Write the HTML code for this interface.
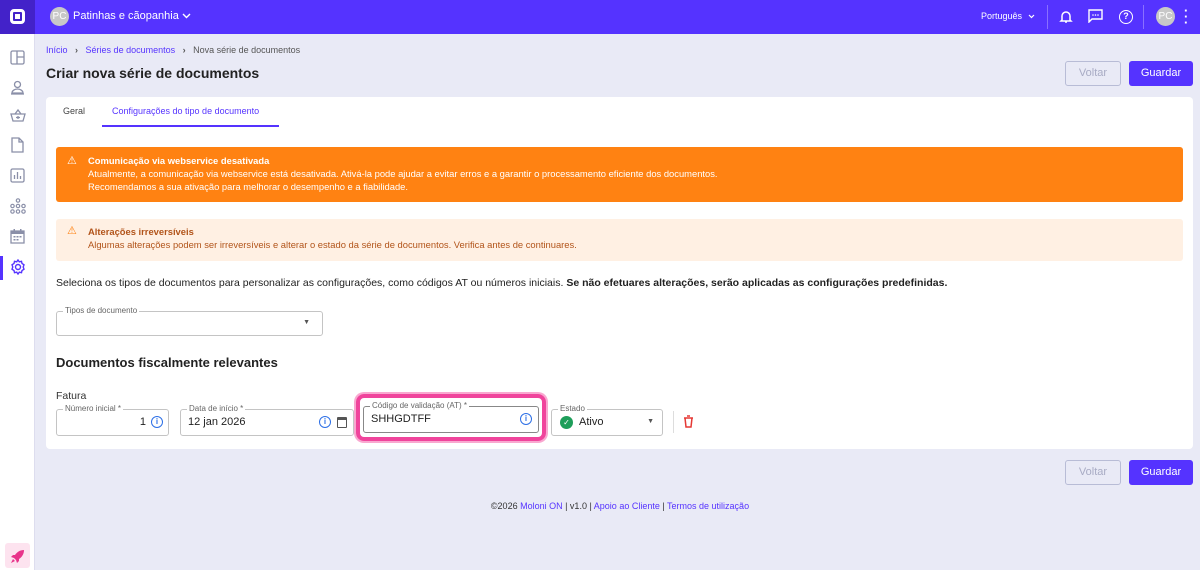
<!DOCTYPE html>
<html><head><meta charset="utf-8"><style>
*{box-sizing:border-box;margin:0;padding:0}
body{width:1200px;height:570px;overflow:hidden;background:#e9eaf6;font-family:"Liberation Sans",sans-serif;color:#222;position:relative;font-size:12px}
.top{position:absolute;left:0;top:0;width:1200px;height:34px;background:#5533ff;color:#fff}
.logo{position:absolute;left:0;top:0;width:35px;height:34px;background:#4322c9}
.side{position:absolute;left:0;top:34px;width:35px;height:536px;background:#fff;border-right:1px solid #dde}
.side svg{position:absolute;left:10px}
.av{position:absolute;width:19px;height:19px;border-radius:50%;background:#c8c8c8;color:#fff;font-size:10px;text-align:center;line-height:19px}
.btn{position:absolute;height:25px;border-radius:3px;font-size:11px;text-align:center;line-height:23px}
.bv{border:1px solid #b8bcd6;color:#a8abc4;background:transparent;width:56px}
.bg{background:#5533ff;color:#fff;width:64px;line-height:25px}
.card{position:absolute;left:46px;top:97px;width:1147px;height:352px;background:#fff;border-radius:4px}
.a1{position:absolute;left:10px;top:50px;width:1127px;height:55px;background:#ff8212;border-radius:3px;color:#fff;font-size:9.4px;line-height:13px;padding:7px 0 0 32px}
.a2{position:absolute;left:10px;top:122px;width:1127px;height:42px;background:#fff0e3;border-radius:3px;color:#b2541a;font-size:9.4px;line-height:13px;padding:6px 0 0 32px}
.fld{position:absolute;height:27px;border:1px solid #c4c4c4;border-radius:3px;top:312px}
.lb{position:absolute;top:-6px;left:6px;background:#fff;padding:0 2px;font-size:8px;color:#666;line-height:10px}
.i{position:absolute;width:12px;height:12px;border:1.3px solid #2d6fe6;border-radius:50%;color:#2d6fe6;font-size:8px;text-align:center;line-height:10px;font-weight:bold}
</style></head><body>
<div class="top">
<div class="logo"><div style="position:absolute;left:10px;top:9px;width:15px;height:15px;border:3px solid #fff;border-radius:4px"></div><div style="position:absolute;left:15px;top:14px;width:5px;height:5px;background:#fff"></div></div>
<div class="av" style="left:50px;top:7px">PC</div>
<div style="position:absolute;left:73px;top:10px;font-size:11px">Patinhas e cãopanhia</div>
<svg style="position:absolute;left:182px;top:13px" width="9" height="6" viewBox="0 0 9 6"><path d="M1 1l3.5 3.5L8 1" stroke="#fff" stroke-width="1.4" fill="none"/></svg>
<div style="position:absolute;left:981px;top:11px;font-size:9px">Português</div>
<svg style="position:absolute;left:1028px;top:14px" width="7" height="5" viewBox="0 0 7 5"><path d="M1 1l2.5 2.5L6 1" stroke="#fff" stroke-width="1.2" fill="none"/></svg>
<div style="position:absolute;left:1047px;top:5px;width:1px;height:24px;background:#8a70ff"></div>
<div style="position:absolute;left:1143px;top:5px;width:1px;height:24px;background:#8a70ff"></div>
<svg style="position:absolute;left:1059px;top:9px" width="14" height="16" viewBox="0 0 14 16"><path d="M3 11V7a4 4 0 018 0v4l1 1H2z M6 13h2" stroke="#fff" stroke-width="1.5" fill="none"/></svg>
<svg style="position:absolute;left:1088px;top:9px" width="15" height="14" viewBox="0 0 15 14"><path d="M1 1h13v9H4l-3 3z" stroke="#fff" stroke-width="1.4" fill="none"/><circle cx="5" cy="6" r=".8" fill="#fff"/><circle cx="7.5" cy="6" r=".8" fill="#fff"/><circle cx="10" cy="6" r=".8" fill="#fff"/></svg>
<div style="position:absolute;left:1119px;top:10px;width:14px;height:14px;border:1.5px solid #fff;border-radius:50%;font-size:9px;text-align:center;line-height:11px;font-weight:bold">?</div>
<div class="av" style="left:1156px;top:7px">PC</div>
<div style="position:absolute;left:1184px;top:8px;font-size:13px;font-weight:bold;line-height:6px">·<br>·<br>·</div>
</div>
<div class="side">
<svg style="top:16px" width="15" height="15" viewBox="0 0 15 15" fill="none" stroke="#8a8fa8" stroke-width="1.3"><rect x="1" y="1" width="13" height="13" rx="1.5"/><path d="M7 1v13M7 7h7"/></svg>
<svg style="top:46px" width="15" height="15" viewBox="0 0 15 15" fill="none" stroke="#8a8fa8" stroke-width="1.3"><circle cx="7.5" cy="4.5" r="3"/><path d="M2 13a5.5 4 0 0111 0zM1 14h13"/></svg>
<svg style="top:74px" width="16" height="15" viewBox="0 0 16 15" fill="none" stroke="#8a8fa8" stroke-width="1.3"><path d="M1 6h14l-2 7H3zM5 6l3-4 3 4M8 8v3M6 9.5h4"/></svg>
<svg style="top:103px;left:11px" width="13" height="16" viewBox="0 0 13 16" fill="none" stroke="#8a8fa8" stroke-width="1.3"><path d="M1 1h7l4 4v10H1zM8 1v4h4"/></svg>
<svg style="top:134px" width="15" height="15" viewBox="0 0 15 15" fill="none" stroke="#8a8fa8" stroke-width="1.3"><rect x="1" y="1" width="13" height="13" rx="1.5"/><path d="M4.5 11V7M7.5 11V4M10.5 11V8"/></svg>
<svg style="top:164px" width="16" height="16" viewBox="0 0 16 16" fill="none" stroke="#8a8fa8" stroke-width="1.2"><circle cx="8" cy="2.5" r="1.7"/><circle cx="8" cy="8" r="1.7"/><circle cx="8" cy="13.5" r="1.7"/><circle cx="2.5" cy="8" r="1.7"/><circle cx="13.5" cy="8" r="1.7"/><circle cx="2.5" cy="13.5" r="1.7"/><circle cx="13.5" cy="13.5" r="1.7"/></svg>
<svg style="top:194px" width="15" height="16" viewBox="0 0 15 16" fill="#8a8fa8"><path d="M1 3h13v12H1z" fill="none" stroke="#8a8fa8" stroke-width="1.3"/><rect x="1" y="3" width="13" height="3"/><rect x="3.5" y="1" width="1.5" height="3"/><rect x="10" y="1" width="1.5" height="3"/><rect x="3.5" y="8" width="2" height="1.5"/><rect x="6.5" y="8" width="2" height="1.5"/><rect x="9.5" y="8" width="2" height="1.5"/><rect x="3.5" y="11" width="2" height="1.5"/><rect x="6.5" y="11" width="2" height="1.5"/></svg>
<div style="position:absolute;left:0;top:222px;width:3px;height:24px;background:#5533ff"></div>
<svg style="top:225px" width="16" height="16" viewBox="0 0 16 16" fill="none" stroke="#5533ff" stroke-width="1.4"><path d="M8 1l1.3 1.8 2.2-.5.5 2.2L14 5.8l-.8 2.2.8 2.2-2 1.3-.5 2.2-2.2-.5L8 15l-1.3-1.8-2.2.5-.5-2.2L2 10.2 2.8 8 2 5.8l2-1.3.5-2.2 2.2.5z"/><circle cx="8" cy="8" r="2.5"/></svg>
<div style="position:absolute;left:5px;top:509px;width:25px;height:25px;background:#fde3ef;border-radius:3px"></div>
<svg style="top:515px;left:10px" width="15" height="15" viewBox="0 0 15 15" fill="#e8338a"><path d="M14 1C10 1 7 3 5 6L3 6 1 8l3 1 2 2 1 3 2-2v-2c3-2 5-5 5-9z"/><path d="M3 10l-2 4 4-2z"/></svg>
</div>
<div style="position:absolute;left:46px;top:45px;font-size:9px;color:#555"><span style="color:#5533ff">Início</span> &nbsp;&nbsp;<b>›</b>&nbsp;&nbsp; <span style="color:#5533ff">Séries de documentos</span> &nbsp;&nbsp;<b>›</b>&nbsp;&nbsp; Nova série de documentos</div>
<div style="position:absolute;left:46px;top:65px;font-size:14px;font-weight:bold;color:#222">Criar nova série de documentos</div>
<div class="btn bv" style="left:1065px;top:61px">Voltar</div>
<div class="btn bg" style="left:1129px;top:61px">Guardar</div>
<div class="card">
<div style="position:absolute;left:17px;top:9px;font-size:9px;color:#444">Geral</div>
<div style="position:absolute;left:66px;top:9px;font-size:9px;color:#5533ff">Configurações do tipo de documento</div>
<div style="position:absolute;left:56px;top:28px;width:177px;height:2px;background:#5533ff"></div>
<div class="a1"><span style="position:absolute;left:11px;top:8px;font-size:11px">⚠</span><b>Comunicação via webservice desativada</b><br>Atualmente, a comunicação via webservice está desativada. Ativá-la pode ajudar a evitar erros e a garantir o processamento eficiente dos documentos.<br>Recomendamos a sua ativação para melhorar o desempenho e a fiabilidade.</div>
<div class="a2"><span style="position:absolute;left:11px;top:6px;font-size:11px;color:#ff8212">⚠</span><b>Alterações irreversíveis</b><br>Algumas alterações podem ser irreversíveis e alterar o estado da série de documentos. Verifica antes de continuares.</div>
<div style="position:absolute;left:10px;top:180px;font-size:10.5px;color:#222">Seleciona os tipos de documentos para personalizar as configurações, como códigos AT ou números iniciais. <b>Se não efetuares alterações, serão aplicadas as configurações predefinidas.</b></div>
<div class="fld" style="left:10px;top:214px;width:267px;height:25px"><span class="lb">Tipos de documento</span><span style="position:absolute;right:12px;top:7px;font-size:7px;color:#555">▼</span></div>
<div style="position:absolute;left:10px;top:258px;font-size:13px;font-weight:bold;color:#222">Documentos fiscalmente relevantes</div>
<div style="position:absolute;left:10px;top:293px;font-size:10.5px;color:#333">Fatura</div>
<div class="fld" style="left:10px;width:113px"><span class="lb">Número inicial *</span><span style="position:absolute;right:22px;top:6px;font-size:11px">1</span><span class="i" style="right:5px;top:6px">i</span></div>
<div class="fld" style="left:134px;width:174px"><span class="lb">Data de início *</span><span style="position:absolute;left:7px;top:6px;font-size:11px">12 jan 2026</span><span class="i" style="right:22px;top:6px">i</span><span style="position:absolute;right:6px;top:7px;width:10px;height:11px;border:1.4px solid #555;border-top:3px solid #555;border-radius:1px"></span></div>
<div style="position:absolute;left:310px;top:297px;width:190px;height:47px;border:4px solid #f0449c;border-radius:8px;box-shadow:0 0 0 2px #f9a8d0"></div>
<div class="fld" style="left:317px;width:176px;top:309px;border-color:#888"><span class="lb">Código de validação (AT) *</span><span style="position:absolute;left:7px;top:6px;font-size:11px">SHHGDTFF</span><span class="i" style="right:6px;top:6px">i</span></div>
<div class="fld" style="left:505px;width:112px"><span class="lb">Estado</span><span style="position:absolute;left:8px;top:6px;width:13px;height:13px;border-radius:50%;background:#1e9e5a;color:#fff;font-size:8px;text-align:center;line-height:13px">✓</span><span style="position:absolute;left:27px;top:6px;font-size:11px">Ativo</span><span style="position:absolute;right:8px;top:8px;font-size:7px;color:#555">▼</span></div>
<div style="position:absolute;left:627px;top:314px;width:1px;height:22px;background:#ddd"></div>
<svg style="position:absolute;left:637px;top:318px" width="11" height="13" viewBox="0 0 11 13"><path d="M1 3h9M4 1h3M2 3l1 9h5l1-9" stroke="#e53935" stroke-width="1.5" fill="none"/></svg>
</div>
<div class="btn bv" style="left:1065px;top:460px">Voltar</div>
<div class="btn bg" style="left:1129px;top:460px">Guardar</div>
<div style="position:absolute;left:0;width:1240px;top:501px;text-align:center;font-size:9px;color:#333">©2026 <span style="color:#5533ff">Moloni ON</span> | v1.0 | <span style="color:#5533ff">Apoio ao Cliente</span> | <span style="color:#5533ff">Termos de utilização</span></div>
</body></html>
